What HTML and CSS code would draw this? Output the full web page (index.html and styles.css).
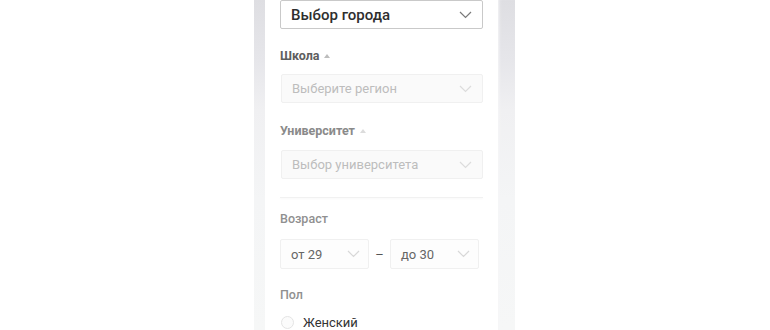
FILE: index.html
```html
<!DOCTYPE html>
<html lang="ru">
<head>
<meta charset="utf-8">
<link rel="stylesheet" href="styles.css">
</head>
<body>
<div class="page">
  <div class="strip strip-left"></div>
  <div class="panel">
    <div class="select select-active">
      <span class="value">Выбор города</span>
      <svg class="chev" width="13" height="8" viewBox="0 0 13 8"><polyline points="1,1 6.5,6.5 12,1" fill="none" stroke="#7a7a7a" stroke-width="1.2"/></svg>
    </div>

    <div class="label label-dark">Школа <span class="tri"></span></div>
    <div class="select select-disabled">
      <span class="value">Выберите регион</span>
      <svg class="chev" width="13" height="8" viewBox="0 0 13 8"><polyline points="1,1 6.5,6.5 12,1" fill="none" stroke="#dcdcdc" stroke-width="1.2"/></svg>
    </div>

    <div class="label label-mid">Университет <span class="tri tri-light"></span></div>
    <div class="select select-disabled select-uni">
      <span class="value">Выбор университета</span>
      <svg class="chev" width="13" height="8" viewBox="0 0 13 8"><polyline points="1,1 6.5,6.5 12,1" fill="none" stroke="#dcdcdc" stroke-width="1.2"/></svg>
    </div>

    <div class="divider"></div>

    <div class="label label-light label-age">Возраст</div>
    <div class="range">
      <div class="select select-small">
        <span class="value">от 29</span>
        <svg class="chev" width="13" height="8" viewBox="0 0 13 8"><polyline points="1,1 6.5,6.5 12,1" fill="none" stroke="#d8d8d8" stroke-width="1.2"/></svg>
      </div>
      <span class="dash">–</span>
      <div class="select select-small">
        <span class="value">до 30</span>
        <svg class="chev" width="13" height="8" viewBox="0 0 13 8"><polyline points="1,1 6.5,6.5 12,1" fill="none" stroke="#d8d8d8" stroke-width="1.2"/></svg>
      </div>
    </div>

    <div class="label label-light label-sex">Пол</div>
    <div class="radio-row">
      <span class="radio"></span>
      <span class="radio-text">Женский</span>
    </div>
  </div>
  <div class="strip strip-right"></div>
</div>
</body>
</html>
```

FILE: styles.css
```css
html, body {
  margin: 0;
  padding: 0;
  background: #ffffff;
  height: 100%;
  overflow: hidden;
}

body {
  font-family: Roboto, "Liberation Sans", Arial, sans-serif;
  font-size: 13px;
  color: #222;
}

.page {
  display: flex;
  height: 330px;
  padding-left: 254px;
}

.strip {
  height: 100%;
  background: linear-gradient(to bottom, #dedee2 0px, #e6e6ea 60px, #f0f0f2 110px, #f4f5f6 200px, #f6f7f7 330px);
}

.strip-left {
  width: 11px;
}

.strip-right {
  width: 17px;
  box-shadow: inset 3px 0 3px -2px #f6f6f8;
}

.panel {
  width: 203px;
  padding: 0 15px;
  background: #ffffff;
  display: flex;
  flex-direction: column;
}

.select {
  box-sizing: border-box;
  height: 30px;
  display: flex;
  align-items: center;
  justify-content: space-between;
  padding: 0 10px 0 10px;
  border-radius: 2px;
}

.select-active {
  border: 1px solid #c9c9c9;
  background: #fff;
  color: #2e2e2e;
  font-weight: 500;
  font-size: 15px;
}

.select-disabled {
  margin-top: 9px;
  border: 1px solid #f0f0f0;
  background: #fafafa;
  color: #bdbdbd;
  font-size: 13px;
  margin-left: 1px;
}

.select-uni {
  margin-top: 10px;
}

.label {
  margin-top: 18px;
  line-height: 18px;
  font-size: 12.5px;
  font-weight: 700;
  display: flex;
  align-items: center;
  gap: 5px;
}

.label-dark {
  color: #5e5e5e;
}

.label-mid {
  color: #8a8a8a;
  margin-top: 19px;
}

.label-light {
  color: #909090;
  font-weight: 500;
}

.tri {
  width: 0;
  height: 0;
  border-left: 3.5px solid transparent;
  border-right: 3.5px solid transparent;
  border-bottom: 4px solid #bdbdbd;
  margin-top: -1px;
}

.tri-light {
  border-bottom-color: #dcdcdc;
}

.divider {
  height: 1px;
  background: #f1f1f1;
  margin-top: 18px;
  box-shadow: 0 1px 2px #f6f6f6;
}

.label-age {
  margin-top: 12px;
}

.label-sex {
  margin-top: 17px;
}

.range {
  margin-top: 11px;
  display: flex;
  align-items: center;
}

.select-small {
  width: 89px;
  border: 1px solid #f0f0f0;
  background: #fdfdfd;
  color: #666;
  font-size: 13px;
  padding-right: 8px;
}

.dash {
  width: 21px;
  text-align: center;
  color: #555;
  font-size: 13px;
}

.radio-row {
  margin-top: 11px;
  display: flex;
  align-items: center;
  gap: 9px;
  padding-left: 1px;
}

.radio {
  box-sizing: border-box;
  width: 13px;
  height: 13px;
  border: 1px solid #e4e4e4;
  border-radius: 50%;
  background: #fbfbfb;
}

.radio-text {
  color: #333;
  font-size: 13px;
}
```
